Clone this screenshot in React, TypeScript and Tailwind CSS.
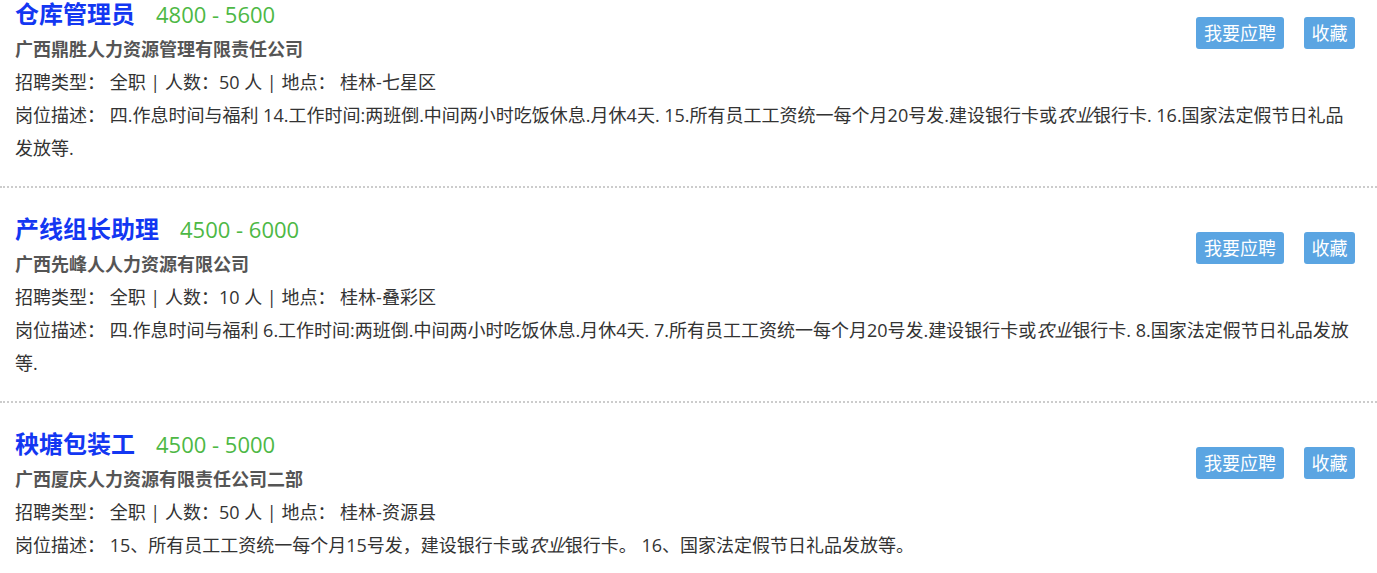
import React from 'react';

interface Job {
  id: number;
  title: string;
  salary: string;
  company: string;
  count: number;
  location: string;
  desc: React.ReactNode;
}

const jobs: Job[] = [
  {
    id: 1,
    title: '仓库管理员',
    salary: '4800 - 5600',
    company: '广西鼎胜人力资源管理有限责任公司',
    count: 50,
    location: '桂林-七星区',
    desc: (
      <>
        四.作息时间与福利 14.工作时间:两班倒.中间两小时吃饭休息.月休4天. 15.所有员工工资统一每个月20号发.建设银行卡或<em>农业</em>银行卡. 16.国家法定假节日礼品发放等.
      </>
    ),
  },
  {
    id: 2,
    title: '产线组长助理',
    salary: '4500 - 6000',
    company: '广西先峰人人力资源有限公司',
    count: 10,
    location: '桂林-叠彩区',
    desc: (
      <>
        四.作息时间与福利 6.工作时间:两班倒.中间两小时吃饭休息.月休4天. 7.所有员工工资统一每个月20号发.建设银行卡或<em>农业</em>银行卡. 8.国家法定假节日礼品发放等.
      </>
    ),
  },
  {
    id: 3,
    title: '秧塘包装工',
    salary: '4500 - 5000',
    company: '广西厦庆人力资源有限责任公司二部',
    count: 50,
    location: '桂林-资源县',
    desc: (
      <>
        15、所有员工工资统一每个月15号发，建设银行卡或<em>农业</em>银行卡。 16、国家法定假节日礼品发放等。
      </>
    ),
  },
];

function JobItem({ job }: { job: Job }) {
  return (
    <div className="pl-[15px] pr-[22px] pt-[27px] first:pt-0 pb-[21px] border-b-2 border-dotted border-[#cccccc]">
      {/* action buttons float to the right */}
      <div className="float-right mt-[17px] flex gap-[20px]">
        <button className="h-[32px] px-[8px] rounded-[3px] bg-[#5ba5e2] text-white text-[18px] leading-[32px]">
          我要应聘
        </button>
        <button className="h-[32px] w-[51px] rounded-[3px] bg-[#5ba5e2] text-white text-[18px] leading-[32px]">
          收藏
        </button>
      </div>

      <div className="flex items-center h-[28px] mb-[5px]">
        <h3 className="text-[24px] font-bold text-[#1337f2] leading-[28px]">{job.title}</h3>
        <span className="ml-[21px] text-[22px] text-[#4db845] leading-[28px]">{job.salary}</span>
      </div>
      <div className="text-[18px] font-bold text-[#555555] leading-[33px]">{job.company}</div>
      <div className="text-[18px] text-[#333333] leading-[33px]">
        招聘类型： 全职 | 人数：{job.count} 人 | 地点： {job.location}
      </div>
      <div className="text-[18px] text-[#333333] leading-[33px]">
        岗位描述： {job.desc}
      </div>
    </div>
  );
}

export default function App() {
  return (
    <div
      className="bg-white min-h-[573px] overflow-hidden"
      style={{ fontFamily: '"Open Sans", "Noto Sans CJK SC", sans-serif' }}
    >
      {jobs.map((job) => (
        <JobItem key={job.id} job={job} />
      ))}
    </div>
  );
}
